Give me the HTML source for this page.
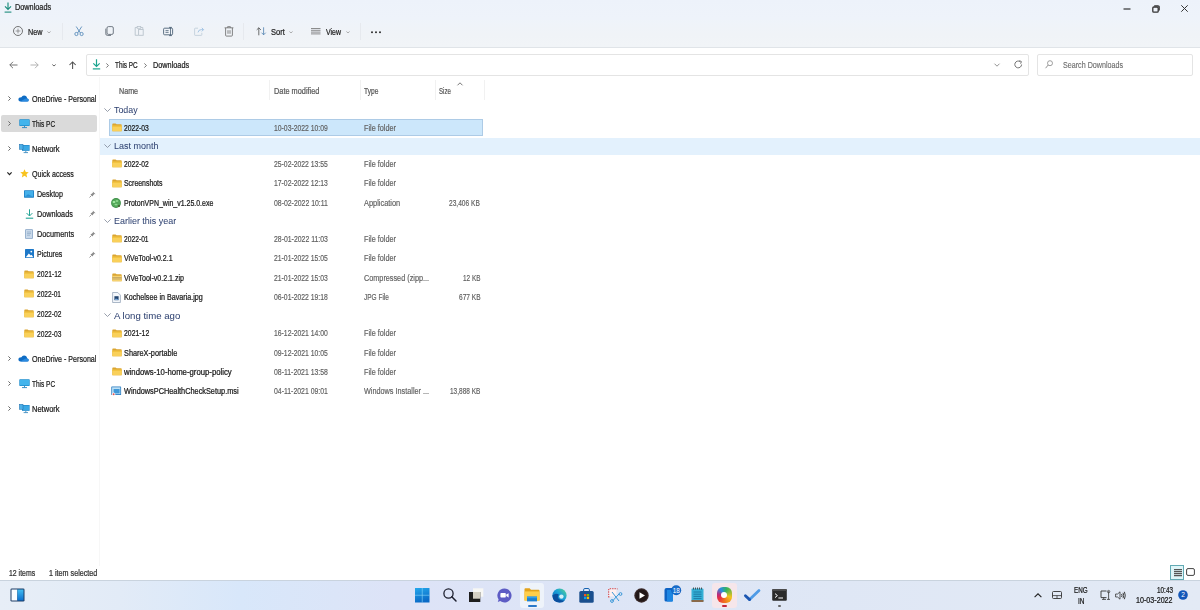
<!DOCTYPE html><html><head><meta charset="utf-8"><style>
*{box-sizing:border-box;margin:0;padding:0}
html,body{width:1200px;height:610px;overflow:hidden;background:#fff;font-family:"Liberation Sans",sans-serif;color:#1a1a1a}
.a{position:absolute;white-space:nowrap}
svg{position:absolute;overflow:visible}
.t7{font-size:7.2px;line-height:10px}
.hdr{font-size:7.4px;color:#5d5d5d;line-height:10px}
.grp{font-size:9px;color:#283c6c;line-height:12px}
.g{color:#666}
.sb{font-size:7.3px;line-height:10px;color:#1e1e1e}
</style></head><body><div id="root" style="position:absolute;left:0;top:0;width:1200px;height:610px">
<div class="a" style="left:0;top:0;width:1200px;height:48px;background:linear-gradient(180deg,#edf2fa 0px,#eef3fa 18px,#f0f3f7 34px,#f1f4f7 47px)"></div>
<div class="a" style="left:0;top:47px;width:1200px;height:1px;background:#e0e4e8"></div>
<svg style="left:3.5px;top:1.5px" width="8" height="11" viewBox="0 0 8 11"><path d="M4 0.6V7.4M1 4.4L4 7.4L7 4.4" stroke="#1b8c7c" stroke-width="1.15" fill="none"/><path d="M0.6 10.1H7.4" stroke="#1b8c7c" stroke-width="1.1"/></svg>
<div class="a" style="left:15.00px;top:3.40px;font-size:7.8px;line-height:10px;color:#1f1f1f;transform:scale(0.9355,1.100);transform-origin:0 50%;will-change:opacity;-webkit-text-stroke:0.22px #1f1f1f;">Downloads</div>
<svg style="left:1123px;top:8px" width="8" height="2"><path d="M0.5 1H7.5" stroke="#333" stroke-width="1.2"/></svg>
<svg style="left:1152px;top:5px" width="8" height="8" viewBox="0 0 8 8"><rect x="0.8" y="2" width="5.4" height="5.2" rx="1" stroke="#333" stroke-width="1.3" fill="none"/><path d="M2.2 0.8H6Q7.2 0.8 7.2 2V5.6" stroke="#333" stroke-width="1.2" fill="none"/></svg>
<svg style="left:1181px;top:5px" width="7" height="7" viewBox="0 0 7 7"><path d="M0.3 0.3L6.7 6.7M6.7 0.3L0.3 6.7" stroke="#333" stroke-width="1"/></svg>
<svg style="left:13px;top:26px" width="10" height="10" viewBox="0 0 10 10"><circle cx="5" cy="5" r="4.5" stroke="#555" stroke-width="0.8" fill="none"/><path d="M5 2.6V7.4M2.6 5H7.4" stroke="#666" stroke-width="0.6"/></svg>
<div class="a" style="left:28.00px;top:27.70px;font-size:7.8px;line-height:10px;color:#1f1f1f;transform:scale(0.9228,1.100);transform-origin:0 50%;will-change:opacity;-webkit-text-stroke:0.22px #1f1f1f;">New</div>
<svg style="left:47px;top:30.5px" width="4" height="2.5" viewBox="0 0 4 2.5"><path d="M0.4 0.5L2 1.9L3.6 0.5" stroke="#999" stroke-width="0.8" fill="none"/></svg>
<div class="a" style="left:62px;top:23px;width:1px;height:17px;background:#e6e9ee"></div>
<svg style="left:74px;top:26px" width="10" height="10" viewBox="0 0 10 10"><path d="M2.2 0.5L6.4 7M7.8 0.5L3.6 7" stroke="#4a82b4" stroke-width="0.8" fill="none"/><circle cx="2.4" cy="8" r="1.6" stroke="#4a82b4" stroke-width="0.8" fill="none"/><circle cx="7.6" cy="8" r="1.6" stroke="#4a82b4" stroke-width="0.8" fill="none"/></svg>
<svg style="left:105px;top:26px" width="9" height="10" viewBox="0 0 9 10"><rect x="2" y="0.6" width="6.3" height="7.8" rx="1.4" stroke="#5c6670" stroke-width="0.85" fill="none"/><path d="M0.8 2.6V7.8Q0.8 9.4 2.4 9.4H6" stroke="#5c6670" stroke-width="0.85" fill="none"/></svg>
<svg style="left:134px;top:26px" width="10" height="10" viewBox="0 0 10 10"><path d="M3 1.5H1.2V9.3H4" stroke="#b9c3cc" stroke-width="0.9" fill="none"/><rect x="3.2" y="0.5" width="3.5" height="1.8" stroke="#b9c3cc" stroke-width="0.8" fill="none"/><rect x="4.6" y="3.5" width="4.6" height="5.8" stroke="#b9c3cc" stroke-width="0.9" fill="none"/><path d="M7 1.5H8.8V3" stroke="#b9c3cc" stroke-width="0.9" fill="none"/></svg>
<svg style="left:163px;top:27px" width="12" height="9" viewBox="0 0 12 9"><rect x="0.6" y="1.2" width="9" height="6.6" rx="1" stroke="#4d6276" stroke-width="0.9" fill="none"/><path d="M7.5 0.3V8.7M6 0.4H9M6 8.6H9M2.5 3.6H5.6M2.5 5.4H5.6" stroke="#4d6276" stroke-width="0.8"/></svg>
<svg style="left:194px;top:27px" width="10" height="9" viewBox="0 0 10 9"><path d="M4 1.2H1.2Q0.6 1.2 0.6 1.8V7.8Q0.6 8.4 1.2 8.4H7.2Q7.8 8.4 7.8 7.8V5.8" stroke="#bccbd8" stroke-width="0.8" fill="none"/><path d="M4 5.4Q4.4 2.6 7.4 2.6H9.4M7.8 0.8L9.6 2.6L7.8 4.4" stroke="#9cc0e2" stroke-width="0.9" fill="none"/></svg>
<svg style="left:224px;top:26px" width="10" height="11" viewBox="0 0 10 11"><path d="M0.6 1.8H9.4M3.6 1.6V0.7H6.4V1.6M1.6 2V9.2Q1.6 10.1 2.5 10.1H7.5Q8.4 10.1 8.4 9.2V2M4 4.2V7.8M6 4.2V7.8" stroke="#666" stroke-width="0.8" fill="none"/></svg>
<div class="a" style="left:243px;top:23px;width:1px;height:17px;background:#e6e9ee"></div>
<svg style="left:256px;top:27px" width="10.5" height="8.5" viewBox="0 0 10.5 8.5"><path d="M2.8 8.3V0.8M0.7 2.9L2.8 0.8L4.9 2.9" stroke="#4a4a4a" stroke-width="0.8" fill="none"/><path d="M7.6 0.3V7.8M5.5 5.7L7.6 7.8L9.7 5.7" stroke="#4d7fae" stroke-width="0.8" fill="none"/></svg>
<div class="a" style="left:270.60px;top:27.70px;font-size:7.8px;line-height:10px;color:#1f1f1f;transform:scale(0.9647,1.100);transform-origin:0 50%;will-change:opacity;-webkit-text-stroke:0.22px #1f1f1f;">Sort</div>
<svg style="left:289px;top:30.5px" width="4" height="2.5" viewBox="0 0 4 2.5"><path d="M0.4 0.5L2 1.9L3.6 0.5" stroke="#999" stroke-width="0.8" fill="none"/></svg>
<svg style="left:310.7px;top:28.2px" width="9.5" height="6.5" viewBox="0 0 9.5 6.5"><path d="M0 0.5H9.5M0 2.3H9.5M0 4.1H9.5M0 5.9H9.5" stroke="#6a6a6a" stroke-width="0.75"/></svg>
<div class="a" style="left:326.00px;top:27.70px;font-size:7.8px;line-height:10px;color:#1f1f1f;transform:scale(0.8947,1.100);transform-origin:0 50%;will-change:opacity;-webkit-text-stroke:0.22px #1f1f1f;">View</div>
<svg style="left:346px;top:30.5px" width="4" height="2.5" viewBox="0 0 4 2.5"><path d="M0.4 0.5L2 1.9L3.6 0.5" stroke="#999" stroke-width="0.8" fill="none"/></svg>
<div class="a" style="left:360px;top:23px;width:1px;height:17px;background:#e6e9ee"></div>
<svg style="left:370.8px;top:30.8px" width="10" height="3" viewBox="0 0 10 3"><circle cx="1" cy="1.2" r="0.95" fill="#222"/><circle cx="5" cy="1.2" r="0.95" fill="#222"/><circle cx="9" cy="1.2" r="0.95" fill="#222"/></svg>
<svg style="left:9px;top:61px" width="9" height="8" viewBox="0 0 9 8"><path d="M8.5 4H0.8M4 0.8L0.8 4L4 7.2" stroke="#666" stroke-width="0.9" fill="none"/></svg>
<svg style="left:30px;top:61px" width="9" height="8" viewBox="0 0 9 8"><path d="M0.5 4H8.2M5 0.8L8.2 4L5 7.2" stroke="#aaa" stroke-width="0.9" fill="none"/></svg>
<svg style="left:52px;top:63.5px" width="4" height="2.5" viewBox="0 0 4 2.5"><path d="M0.3 0.5L2 2L3.7 0.5" stroke="#555" stroke-width="0.9" fill="none"/></svg>
<svg style="left:68.5px;top:60.5px" width="8" height="8.5" viewBox="0 0 8 8.5"><path d="M3.6 8V1M0.5 4L3.6 0.9L6.7 4" stroke="#505050" stroke-width="1.05" fill="none"/></svg>
<div class="a" style="left:86px;top:54px;width:943px;height:22px;border:1px solid #e4e4e4;border-radius:2px;background:#fff"></div>
<svg style="left:92px;top:59px" width="9" height="11" viewBox="0 0 9 11"><path d="M4.5 0.3V7.4M1.3 4.3L4.5 7.5L7.7 4.3" stroke="#1ba48f" stroke-width="1.2" fill="none"/><path d="M0.8 9.9H8.2" stroke="#1ba48f" stroke-width="1.2"/></svg>
<svg style="left:105.5px;top:62.5px" width="3" height="5" viewBox="0 0 3 5"><path d="M0.4 0.4L2.4 2.5L0.4 4.6" stroke="#555" stroke-width="0.8" fill="none"/></svg>
<div class="a" style="left:115.00px;top:60.75px;font-size:7.8px;line-height:10px;color:#1f1f1f;transform:scale(0.8184,1.100);transform-origin:0 50%;will-change:opacity;-webkit-text-stroke:0.22px #1f1f1f;">This PC</div>
<svg style="left:143.5px;top:62.5px" width="3" height="5" viewBox="0 0 3 5"><path d="M0.4 0.4L2.4 2.5L0.4 4.6" stroke="#555" stroke-width="0.8" fill="none"/></svg>
<div class="a" style="left:153.30px;top:60.75px;font-size:7.8px;line-height:10px;color:#1f1f1f;transform:scale(0.9355,1.100);transform-origin:0 50%;will-change:opacity;-webkit-text-stroke:0.22px #1f1f1f;">Downloads</div>
<svg style="left:993.5px;top:63px" width="6" height="4" viewBox="0 0 6 4"><path d="M0.5 0.7L3 3.2L5.5 0.7" stroke="#777" stroke-width="0.8" fill="none"/></svg>
<svg style="left:1014px;top:60px" width="9" height="9" viewBox="0 0 9 9"><path d="M7.6 4.5A3.4 3.4 0 1 1 6.2 1.7" stroke="#666" stroke-width="0.9" fill="none"/><path d="M5.4 0.6L7.4 1.6L6.6 3.7" stroke="#666" stroke-width="0.9" fill="none"/></svg>
<div class="a" style="left:1037px;top:54px;width:156px;height:22px;border:1px solid #e4e4e4;border-radius:2px;background:#fff"></div>
<svg style="left:1045px;top:60px" width="8" height="9" viewBox="0 0 8 9"><circle cx="5" cy="3.2" r="2.5" stroke="#888" stroke-width="0.8" fill="none"/><path d="M3.2 5L0.6 8.2" stroke="#888" stroke-width="0.9"/></svg>
<div class="a" style="left:1062.50px;top:60.75px;font-size:7.6px;line-height:10px;color:#6a6a6a;transform:scale(0.9421,1.130);transform-origin:0 50%;will-change:opacity;-webkit-text-stroke:0.1px #6a6a6a;">Search Downloads</div>
<div class="a" style="left:99px;top:77px;width:1px;height:489px;background:#f7f7f7"></div>
<div class="a" style="left:1px;top:115px;width:96px;height:17px;background:#dadada;border-radius:2px"></div>
<svg style="left:8px;top:95.9px" width="3" height="5" viewBox="0 0 3 5"><path d="M0.4 0.4L2.5 2.5L0.4 4.6" stroke="#6a6a6a" stroke-width="1" fill="none"/></svg>
<svg style="left:18px;top:94.9px" width="11" height="7" viewBox="0 0 11 7"><path d="M2.4 6.6H9.2Q10.7 6.6 10.7 5.1Q10.7 3.7 9.2 3.6Q8.8 0.6 6 0.6Q4.2 0.6 3.4 2.2Q0.4 2.2 0.4 4.5Q0.4 6.6 2.4 6.6Z" fill="#0f6cc4"/><path d="M2.4 6.6H9.2Q10.7 6.6 10.7 5.1Q10.7 3.7 9.2 3.6Q7 3.4 5.8 4.4Z" fill="#2a8ae0"/></svg>
<div class="a" style="left:32.00px;top:93.90px;font-size:8.3px;line-height:10px;color:#1c1c1c;transform:scale(0.8565,1.000);transform-origin:0 50%;will-change:opacity;-webkit-text-stroke:0.22px #1c1c1c;">OneDrive - Personal</div>
<svg style="left:8px;top:120.9px" width="3" height="5" viewBox="0 0 3 5"><path d="M0.4 0.4L2.5 2.5L0.4 4.6" stroke="#6a6a6a" stroke-width="1" fill="none"/></svg>
<svg style="left:18.5px;top:118.9px" width="11" height="9" viewBox="0 0 11 9"><rect x="0.3" y="0.3" width="10.4" height="6.6" rx="0.6" fill="#1e90d0"/><rect x="1" y="1" width="9" height="5.2" fill="#42b4ec"/><path d="M5.5 7V8.4M3 8.6H8" stroke="#2a86c0" stroke-width="0.9"/></svg>
<div class="a" style="left:32.00px;top:118.90px;font-size:8.3px;line-height:10px;color:#1c1c1c;transform:scale(0.7826,1.000);transform-origin:0 50%;will-change:opacity;-webkit-text-stroke:0.22px #1c1c1c;">This PC</div>
<svg style="left:8px;top:145.9px" width="3" height="5" viewBox="0 0 3 5"><path d="M0.4 0.4L2.5 2.5L0.4 4.6" stroke="#6a6a6a" stroke-width="1" fill="none"/></svg>
<svg style="left:18.5px;top:143.9px" width="11" height="9" viewBox="0 0 11 9"><rect x="3" y="1" width="7.6" height="5.8" fill="#1e86c8"/><rect x="3.6" y="1.6" width="6.4" height="4.6" fill="#3aa8e4"/><rect x="0.4" y="0.3" width="3.6" height="5" fill="#4cb0e8" stroke="#1a6aa8" stroke-width="0.5"/><path d="M6.8 7V8.4M4.6 8.6H9" stroke="#2a7fb8" stroke-width="0.8"/></svg>
<div class="a" style="left:32.00px;top:143.90px;font-size:8.3px;line-height:10px;color:#1c1c1c;transform:scale(0.9067,1.000);transform-origin:0 50%;will-change:opacity;-webkit-text-stroke:0.22px #1c1c1c;">Network</div>
<svg style="left:8px;top:355.9px" width="3" height="5" viewBox="0 0 3 5"><path d="M0.4 0.4L2.5 2.5L0.4 4.6" stroke="#6a6a6a" stroke-width="1" fill="none"/></svg>
<svg style="left:18px;top:354.9px" width="11" height="7" viewBox="0 0 11 7"><path d="M2.4 6.6H9.2Q10.7 6.6 10.7 5.1Q10.7 3.7 9.2 3.6Q8.8 0.6 6 0.6Q4.2 0.6 3.4 2.2Q0.4 2.2 0.4 4.5Q0.4 6.6 2.4 6.6Z" fill="#0f6cc4"/><path d="M2.4 6.6H9.2Q10.7 6.6 10.7 5.1Q10.7 3.7 9.2 3.6Q7 3.4 5.8 4.4Z" fill="#2a8ae0"/></svg>
<div class="a" style="left:32.00px;top:353.90px;font-size:8.3px;line-height:10px;color:#1c1c1c;transform:scale(0.8565,1.000);transform-origin:0 50%;will-change:opacity;-webkit-text-stroke:0.22px #1c1c1c;">OneDrive - Personal</div>
<svg style="left:8px;top:380.9px" width="3" height="5" viewBox="0 0 3 5"><path d="M0.4 0.4L2.5 2.5L0.4 4.6" stroke="#6a6a6a" stroke-width="1" fill="none"/></svg>
<svg style="left:18.5px;top:378.9px" width="11" height="9" viewBox="0 0 11 9"><rect x="0.3" y="0.3" width="10.4" height="6.6" rx="0.6" fill="#1e90d0"/><rect x="1" y="1" width="9" height="5.2" fill="#42b4ec"/><path d="M5.5 7V8.4M3 8.6H8" stroke="#2a86c0" stroke-width="0.9"/></svg>
<div class="a" style="left:32.00px;top:378.90px;font-size:8.3px;line-height:10px;color:#1c1c1c;transform:scale(0.7826,1.000);transform-origin:0 50%;will-change:opacity;-webkit-text-stroke:0.22px #1c1c1c;">This PC</div>
<svg style="left:8px;top:405.9px" width="3" height="5" viewBox="0 0 3 5"><path d="M0.4 0.4L2.5 2.5L0.4 4.6" stroke="#6a6a6a" stroke-width="1" fill="none"/></svg>
<svg style="left:18.5px;top:403.9px" width="11" height="9" viewBox="0 0 11 9"><rect x="3" y="1" width="7.6" height="5.8" fill="#1e86c8"/><rect x="3.6" y="1.6" width="6.4" height="4.6" fill="#3aa8e4"/><rect x="0.4" y="0.3" width="3.6" height="5" fill="#4cb0e8" stroke="#1a6aa8" stroke-width="0.5"/><path d="M6.8 7V8.4M4.6 8.6H9" stroke="#2a7fb8" stroke-width="0.8"/></svg>
<div class="a" style="left:32.00px;top:403.90px;font-size:8.3px;line-height:10px;color:#1c1c1c;transform:scale(0.9067,1.000);transform-origin:0 50%;will-change:opacity;-webkit-text-stroke:0.22px #1c1c1c;">Network</div>
<svg style="left:7px;top:172.1px" width="5" height="3" viewBox="0 0 5 3"><path d="M0.4 0.4L2.5 2.6L4.6 0.4" stroke="#222" stroke-width="1.2" fill="none"/></svg>
<svg style="left:19.5px;top:169px" width="9" height="9" viewBox="0 0 10 10"><path d="M5 0.3L6.4 3.4L9.7 3.7L7.2 5.9L7.9 9.4L5 7.6L2.1 9.4L2.8 5.9L0.3 3.7L3.6 3.4Z" fill="#f8c31f"/></svg>
<div class="a" style="left:32.00px;top:168.90px;font-size:8.3px;line-height:10px;color:#1c1c1c;transform:scale(0.8490,1.000);transform-origin:0 50%;will-change:opacity;-webkit-text-stroke:0.22px #1c1c1c;">Quick access</div>
<svg style="left:24px;top:190px" width="10" height="8" viewBox="0 0 10 8"><rect x="0" y="0.3" width="10" height="7.4" rx="0.6" fill="#1b7fc4"/><rect x="0.8" y="1" width="8.4" height="5.8" fill="#45b0ea"/><path d="M0.8 6.8L4 4.2L9.2 6.8Z" fill="#2a90d4"/></svg>
<div class="a" style="left:37.00px;top:189.10px;font-size:8.3px;line-height:10px;color:#1c1c1c;transform:scale(0.8539,1.000);transform-origin:0 50%;will-change:opacity;-webkit-text-stroke:0.22px #1c1c1c;">Desktop</div>
<svg style="left:89px;top:190.5px" width="7" height="7" viewBox="0 0 7 7"><path d="M0.5 6.5L2.6 4.4" stroke="#8c8c8c" stroke-width="0.9"/><path d="M1.4 3.2L3.8 5.6L4.2 4.2L5.4 3L6.6 3.2L3.8 0.4L4 1.6L2.8 2.8Z" fill="#8c8c8c"/></svg>
<svg style="left:24.5px;top:209px" width="9" height="10" viewBox="0 0 9 10"><path d="M4.5 0.3V6.8M1.6 4.1L4.5 7L7.4 4.1" stroke="#22a394" stroke-width="1" fill="none"/><path d="M0.8 9.2H8.2" stroke="#22a394" stroke-width="1.1"/></svg>
<div class="a" style="left:37.00px;top:209.00px;font-size:8.3px;line-height:10px;color:#1c1c1c;transform:scale(0.8718,1.000);transform-origin:0 50%;will-change:opacity;-webkit-text-stroke:0.22px #1c1c1c;">Downloads</div>
<svg style="left:89px;top:210.3px" width="7" height="7" viewBox="0 0 7 7"><path d="M0.5 6.5L2.6 4.4" stroke="#8c8c8c" stroke-width="0.9"/><path d="M1.4 3.2L3.8 5.6L4.2 4.2L5.4 3L6.6 3.2L3.8 0.4L4 1.6L2.8 2.8Z" fill="#8c8c8c"/></svg>
<svg style="left:25px;top:229px" width="8" height="10" viewBox="0 0 8 10"><rect x="0.2" y="0.2" width="7.6" height="9.6" rx="0.6" fill="#7f9fc2"/><rect x="1" y="1" width="6" height="8" fill="#c9d9ea"/><path d="M2 3H6M2 4.6H6M2 6.2H5" stroke="#8aa6c4" stroke-width="0.7"/></svg>
<div class="a" style="left:37.00px;top:229.00px;font-size:8.3px;line-height:10px;color:#1c1c1c;transform:scale(0.8838,1.000);transform-origin:0 50%;will-change:opacity;-webkit-text-stroke:0.22px #1c1c1c;">Documents</div>
<svg style="left:89px;top:230.5px" width="7" height="7" viewBox="0 0 7 7"><path d="M0.5 6.5L2.6 4.4" stroke="#8c8c8c" stroke-width="0.9"/><path d="M1.4 3.2L3.8 5.6L4.2 4.2L5.4 3L6.6 3.2L3.8 0.4L4 1.6L2.8 2.8Z" fill="#8c8c8c"/></svg>
<svg style="left:24.5px;top:249px" width="9" height="9" viewBox="0 0 9 9"><rect x="0" y="0" width="9" height="9" rx="0.6" fill="#1d78c8"/><path d="M0.8 8.2L3.8 4.6L5.8 6.6L6.6 5.8L8.2 8.2Z" fill="#fff"/><circle cx="6.3" cy="2.6" r="0.9" fill="#fff"/></svg>
<div class="a" style="left:37.00px;top:248.80px;font-size:8.3px;line-height:10px;color:#1c1c1c;transform:scale(0.8438,1.000);transform-origin:0 50%;will-change:opacity;-webkit-text-stroke:0.22px #1c1c1c;">Pictures</div>
<svg style="left:89px;top:250.5px" width="7" height="7" viewBox="0 0 7 7"><path d="M0.5 6.5L2.6 4.4" stroke="#8c8c8c" stroke-width="0.9"/><path d="M1.4 3.2L3.8 5.6L4.2 4.2L5.4 3L6.6 3.2L3.8 0.4L4 1.6L2.8 2.8Z" fill="#8c8c8c"/></svg>
<svg style="left:24px;top:269.5px" width="10" height="8.6" viewBox="0 0 10 8.6"><path d="M0.3 1.2Q0.3 0.4 1 0.4H3.6L4.6 1.3H9Q9.7 1.3 9.7 2V7.8Q9.7 8.3 9.2 8.3H0.8Q0.3 8.3 0.3 7.8Z" fill="#dba530"/><path d="M0.3 2.7H9.7V7.8Q9.7 8.3 9.2 8.3H0.8Q0.3 8.3 0.3 7.8Z" fill="#f9d05a"/><path d="M0.3 2.7H9.7V4H0.3Z" fill="#f2c340"/></svg>
<div class="a" style="left:37.00px;top:269.00px;font-size:8.3px;line-height:10px;color:#1c1c1c;transform:scale(0.8076,1.000);transform-origin:0 50%;will-change:opacity;-webkit-text-stroke:0.22px #1c1c1c;">2021-12</div>
<svg style="left:24px;top:289.4px" width="10" height="8.6" viewBox="0 0 10 8.6"><path d="M0.3 1.2Q0.3 0.4 1 0.4H3.6L4.6 1.3H9Q9.7 1.3 9.7 2V7.8Q9.7 8.3 9.2 8.3H0.8Q0.3 8.3 0.3 7.8Z" fill="#dba530"/><path d="M0.3 2.7H9.7V7.8Q9.7 8.3 9.2 8.3H0.8Q0.3 8.3 0.3 7.8Z" fill="#f9d05a"/><path d="M0.3 2.7H9.7V4H0.3Z" fill="#f2c340"/></svg>
<div class="a" style="left:37.00px;top:288.90px;font-size:8.3px;line-height:10px;color:#1c1c1c;transform:scale(0.7879,1.000);transform-origin:0 50%;will-change:opacity;-webkit-text-stroke:0.22px #1c1c1c;">2022-01</div>
<svg style="left:24px;top:309.4px" width="10" height="8.6" viewBox="0 0 10 8.6"><path d="M0.3 1.2Q0.3 0.4 1 0.4H3.6L4.6 1.3H9Q9.7 1.3 9.7 2V7.8Q9.7 8.3 9.2 8.3H0.8Q0.3 8.3 0.3 7.8Z" fill="#dba530"/><path d="M0.3 2.7H9.7V7.8Q9.7 8.3 9.2 8.3H0.8Q0.3 8.3 0.3 7.8Z" fill="#f9d05a"/><path d="M0.3 2.7H9.7V4H0.3Z" fill="#f2c340"/></svg>
<div class="a" style="left:37.00px;top:308.90px;font-size:8.3px;line-height:10px;color:#1c1c1c;transform:scale(0.8010,1.000);transform-origin:0 50%;will-change:opacity;-webkit-text-stroke:0.22px #1c1c1c;">2022-02</div>
<svg style="left:24px;top:329.4px" width="10" height="8.6" viewBox="0 0 10 8.6"><path d="M0.3 1.2Q0.3 0.4 1 0.4H3.6L4.6 1.3H9Q9.7 1.3 9.7 2V7.8Q9.7 8.3 9.2 8.3H0.8Q0.3 8.3 0.3 7.8Z" fill="#dba530"/><path d="M0.3 2.7H9.7V7.8Q9.7 8.3 9.2 8.3H0.8Q0.3 8.3 0.3 7.8Z" fill="#f9d05a"/><path d="M0.3 2.7H9.7V4H0.3Z" fill="#f2c340"/></svg>
<div class="a" style="left:37.00px;top:328.90px;font-size:8.3px;line-height:10px;color:#1c1c1c;transform:scale(0.8010,1.000);transform-origin:0 50%;will-change:opacity;-webkit-text-stroke:0.22px #1c1c1c;">2022-03</div>
<div class="a" style="left:118.60px;top:86.50px;font-size:7.6px;line-height:10px;color:#5a5a5a;transform:scale(0.9421,1.130);transform-origin:0 50%;will-change:opacity;-webkit-text-stroke:0.22px #5a5a5a;">Name</div>
<div class="a" style="left:274.00px;top:86.50px;font-size:7.6px;line-height:10px;color:#5a5a5a;transform:scale(0.9682,1.130);transform-origin:0 50%;will-change:opacity;-webkit-text-stroke:0.22px #5a5a5a;">Date modified</div>
<div class="a" style="left:364.00px;top:86.50px;font-size:7.6px;line-height:10px;color:#5a5a5a;transform:scale(0.8740,1.130);transform-origin:0 50%;will-change:opacity;-webkit-text-stroke:0.22px #5a5a5a;">Type</div>
<div class="a" style="left:438.60px;top:86.50px;font-size:7.6px;line-height:10px;color:#5a5a5a;transform:scale(0.7981,1.130);transform-origin:0 50%;will-change:opacity;-webkit-text-stroke:0.22px #5a5a5a;">Size</div>
<div class="a" style="left:269px;top:80px;width:1px;height:20px;background:#f1f1f1"></div>
<div class="a" style="left:359.5px;top:80px;width:1px;height:20px;background:#f1f1f1"></div>
<div class="a" style="left:434.5px;top:80px;width:1px;height:20px;background:#f1f1f1"></div>
<div class="a" style="left:484px;top:80px;width:1px;height:20px;background:#f1f1f1"></div>
<svg style="left:457.3px;top:81.6px" width="6" height="4" viewBox="0 0 6 4"><path d="M0.5 3.3L3 0.8L5.5 3.3" stroke="#666" stroke-width="0.9" fill="none"/></svg>
<div class="a" style="left:108.5px;top:119px;width:374px;height:17px;background:#cce7fb;border:1px solid #adcbe6"></div>
<div class="a" style="left:100px;top:138px;width:1100px;height:17px;background:#e3f1fd"></div>
<svg style="left:104px;top:107.50px" width="7" height="4" viewBox="0 0 7 4"><path d="M0.4 0.4L3.5 3.5L6.6 0.4" stroke="#7d8797" stroke-width="0.8" fill="none"/></svg>
<div class="a" style="left:113.50px;top:103.70px;font-size:9.2px;line-height:12px;color:#2e4170;transform:scale(0.9613,1.000);transform-origin:0 50%;will-change:opacity;-webkit-text-stroke:0.02px #2e4170;">Today</div>
<svg style="left:111.6px;top:123.2px" width="10" height="8.6" viewBox="0 0 10 8.6"><path d="M0.3 1.2Q0.3 0.4 1 0.4H3.6L4.6 1.3H9Q9.7 1.3 9.7 2V7.8Q9.7 8.3 9.2 8.3H0.8Q0.3 8.3 0.3 7.8Z" fill="#dba530"/><path d="M0.3 2.7H9.7V7.8Q9.7 8.3 9.2 8.3H0.8Q0.3 8.3 0.3 7.8Z" fill="#f9d05a"/><path d="M0.3 2.7H9.7V4H0.3Z" fill="#f2c340"/></svg>
<div class="a" style="left:123.90px;top:123.80px;font-size:7.6px;line-height:10px;color:#1b1b1b;transform:scale(0.8874,1.130);transform-origin:0 50%;will-change:opacity;-webkit-text-stroke:0.22px #1b1b1b;">2022-03</div>
<div class="a" style="left:274.10px;top:123.80px;font-size:7.6px;line-height:10px;color:#606060;transform:scale(0.8982,1.130);transform-origin:0 50%;will-change:opacity;-webkit-text-stroke:0.15px #606060;">10-03-2022 10:09</div>
<div class="a" style="left:363.80px;top:123.80px;font-size:7.6px;line-height:10px;color:#606060;transform:scale(0.9590,1.130);transform-origin:0 50%;will-change:opacity;-webkit-text-stroke:0.15px #606060;">File folder</div>
<svg style="left:104px;top:144.00px" width="7" height="4" viewBox="0 0 7 4"><path d="M0.4 0.4L3.5 3.5L6.6 0.4" stroke="#7d8797" stroke-width="0.8" fill="none"/></svg>
<div class="a" style="left:113.50px;top:140.20px;font-size:9.2px;line-height:12px;color:#2e4170;transform:scale(0.9799,1.000);transform-origin:0 50%;will-change:opacity;-webkit-text-stroke:0.02px #2e4170;">Last month</div>
<svg style="left:111.6px;top:159.29999999999998px" width="10" height="8.6" viewBox="0 0 10 8.6"><path d="M0.3 1.2Q0.3 0.4 1 0.4H3.6L4.6 1.3H9Q9.7 1.3 9.7 2V7.8Q9.7 8.3 9.2 8.3H0.8Q0.3 8.3 0.3 7.8Z" fill="#dba530"/><path d="M0.3 2.7H9.7V7.8Q9.7 8.3 9.2 8.3H0.8Q0.3 8.3 0.3 7.8Z" fill="#f9d05a"/><path d="M0.3 2.7H9.7V4H0.3Z" fill="#f2c340"/></svg>
<div class="a" style="left:123.90px;top:159.90px;font-size:7.6px;line-height:10px;color:#1b1b1b;transform:scale(0.8856,1.130);transform-origin:0 50%;will-change:opacity;-webkit-text-stroke:0.22px #1b1b1b;">2022-02</div>
<div class="a" style="left:274.10px;top:159.90px;font-size:7.6px;line-height:10px;color:#606060;transform:scale(0.8982,1.130);transform-origin:0 50%;will-change:opacity;-webkit-text-stroke:0.15px #606060;">25-02-2022 13:55</div>
<div class="a" style="left:363.80px;top:159.90px;font-size:7.6px;line-height:10px;color:#606060;transform:scale(0.9590,1.130);transform-origin:0 50%;will-change:opacity;-webkit-text-stroke:0.15px #606060;">File folder</div>
<svg style="left:111.6px;top:178.7px" width="10" height="8.6" viewBox="0 0 10 8.6"><path d="M0.3 1.2Q0.3 0.4 1 0.4H3.6L4.6 1.3H9Q9.7 1.3 9.7 2V7.8Q9.7 8.3 9.2 8.3H0.8Q0.3 8.3 0.3 7.8Z" fill="#dba530"/><path d="M0.3 2.7H9.7V7.8Q9.7 8.3 9.2 8.3H0.8Q0.3 8.3 0.3 7.8Z" fill="#f9d05a"/><path d="M0.3 2.7H9.7V4H0.3Z" fill="#f2c340"/></svg>
<div class="a" style="left:123.90px;top:179.30px;font-size:7.6px;line-height:10px;color:#1b1b1b;transform:scale(0.9113,1.130);transform-origin:0 50%;will-change:opacity;-webkit-text-stroke:0.22px #1b1b1b;">Screenshots</div>
<div class="a" style="left:274.10px;top:179.30px;font-size:7.6px;line-height:10px;color:#606060;transform:scale(0.8982,1.130);transform-origin:0 50%;will-change:opacity;-webkit-text-stroke:0.15px #606060;">17-02-2022 12:13</div>
<div class="a" style="left:363.80px;top:179.30px;font-size:7.6px;line-height:10px;color:#606060;transform:scale(0.9590,1.130);transform-origin:0 50%;will-change:opacity;-webkit-text-stroke:0.15px #606060;">File folder</div>
<svg style="left:111px;top:197.70000000000002px" width="10" height="10" viewBox="0 0 10 10"><circle cx="5" cy="5" r="4.9" fill="#3d9048"/><circle cx="5" cy="5" r="4" fill="#55a85a"/><ellipse cx="3" cy="4" rx="1.4" ry="0.9" fill="#a8f0a8"/><ellipse cx="6" cy="3" rx="1.3" ry="0.8" fill="#a0e8a0"/><ellipse cx="5" cy="6.6" rx="1.6" ry="0.8" fill="#8fd890"/><circle cx="8" cy="8" r="1" fill="#4a5a30"/></svg>
<div class="a" style="left:123.90px;top:198.70px;font-size:7.6px;line-height:10px;color:#1b1b1b;transform:scale(0.9200,1.130);transform-origin:0 50%;will-change:opacity;-webkit-text-stroke:0.22px #1b1b1b;">ProtonVPN_win_v1.25.0.exe</div>
<div class="a" style="left:274.10px;top:198.70px;font-size:7.6px;line-height:10px;color:#606060;transform:scale(0.9068,1.130);transform-origin:0 50%;will-change:opacity;-webkit-text-stroke:0.15px #606060;">08-02-2022 10:11</div>
<div class="a" style="left:363.80px;top:198.70px;font-size:7.6px;line-height:10px;color:#606060;transform:scale(0.9736,1.130);transform-origin:0 50%;will-change:opacity;-webkit-text-stroke:0.15px #606060;">Application</div>
<div class="a" style="left:449.40px;top:198.70px;font-size:7.6px;line-height:10px;color:#606060;transform:scale(0.8677,1.130);transform-origin:0 50%;will-change:opacity;-webkit-text-stroke:0.15px #606060;">23,406 KB</div>
<svg style="left:104px;top:218.90px" width="7" height="4" viewBox="0 0 7 4"><path d="M0.4 0.4L3.5 3.5L6.6 0.4" stroke="#7d8797" stroke-width="0.8" fill="none"/></svg>
<div class="a" style="left:113.50px;top:215.10px;font-size:9.2px;line-height:12px;color:#2e4170;transform:scale(0.9748,1.000);transform-origin:0 50%;will-change:opacity;-webkit-text-stroke:0.02px #2e4170;">Earlier this year</div>
<svg style="left:111.6px;top:234.29999999999998px" width="10" height="8.6" viewBox="0 0 10 8.6"><path d="M0.3 1.2Q0.3 0.4 1 0.4H3.6L4.6 1.3H9Q9.7 1.3 9.7 2V7.8Q9.7 8.3 9.2 8.3H0.8Q0.3 8.3 0.3 7.8Z" fill="#dba530"/><path d="M0.3 2.7H9.7V7.8Q9.7 8.3 9.2 8.3H0.8Q0.3 8.3 0.3 7.8Z" fill="#f9d05a"/><path d="M0.3 2.7H9.7V4H0.3Z" fill="#f2c340"/></svg>
<div class="a" style="left:123.90px;top:234.90px;font-size:7.6px;line-height:10px;color:#1b1b1b;transform:scale(0.8820,1.130);transform-origin:0 50%;will-change:opacity;-webkit-text-stroke:0.22px #1b1b1b;">2022-01</div>
<div class="a" style="left:274.10px;top:234.90px;font-size:7.6px;line-height:10px;color:#606060;transform:scale(0.9068,1.130);transform-origin:0 50%;will-change:opacity;-webkit-text-stroke:0.15px #606060;">28-01-2022 11:03</div>
<div class="a" style="left:363.80px;top:234.90px;font-size:7.6px;line-height:10px;color:#606060;transform:scale(0.9590,1.130);transform-origin:0 50%;will-change:opacity;-webkit-text-stroke:0.15px #606060;">File folder</div>
<svg style="left:111.6px;top:253.59999999999997px" width="10" height="8.6" viewBox="0 0 10 8.6"><path d="M0.3 1.2Q0.3 0.4 1 0.4H3.6L4.6 1.3H9Q9.7 1.3 9.7 2V7.8Q9.7 8.3 9.2 8.3H0.8Q0.3 8.3 0.3 7.8Z" fill="#dba530"/><path d="M0.3 2.7H9.7V7.8Q9.7 8.3 9.2 8.3H0.8Q0.3 8.3 0.3 7.8Z" fill="#f9d05a"/><path d="M0.3 2.7H9.7V4H0.3Z" fill="#f2c340"/></svg>
<div class="a" style="left:123.90px;top:254.20px;font-size:7.6px;line-height:10px;color:#1b1b1b;transform:scale(0.9227,1.130);transform-origin:0 50%;will-change:opacity;-webkit-text-stroke:0.22px #1b1b1b;">ViVeTool-v0.2.1</div>
<div class="a" style="left:274.10px;top:254.20px;font-size:7.6px;line-height:10px;color:#606060;transform:scale(0.8982,1.130);transform-origin:0 50%;will-change:opacity;-webkit-text-stroke:0.15px #606060;">21-01-2022 15:05</div>
<div class="a" style="left:363.80px;top:254.20px;font-size:7.6px;line-height:10px;color:#606060;transform:scale(0.9590,1.130);transform-origin:0 50%;will-change:opacity;-webkit-text-stroke:0.15px #606060;">File folder</div>
<svg style="left:111.6px;top:272.9px" width="10" height="8.6" viewBox="0 0 10 8.6"><path d="M0.3 1.2Q0.3 0.4 1 0.4H3.6L4.6 1.3H9Q9.7 1.3 9.7 2V7.8Q9.7 8.3 9.2 8.3H0.8Q0.3 8.3 0.3 7.8Z" fill="#dba530"/><path d="M0.3 2.7H9.7V7.8Q9.7 8.3 9.2 8.3H0.8Q0.3 8.3 0.3 7.8Z" fill="#f6d270"/><path d="M0.3 4.6H9.7M0.3 6H9.7" stroke="#b09660" stroke-width="0.7"/></svg>
<div class="a" style="left:123.90px;top:273.50px;font-size:7.6px;line-height:10px;color:#1b1b1b;transform:scale(0.9318,1.130);transform-origin:0 50%;will-change:opacity;-webkit-text-stroke:0.22px #1b1b1b;">ViVeTool-v0.2.1.zip</div>
<div class="a" style="left:274.10px;top:273.50px;font-size:7.6px;line-height:10px;color:#606060;transform:scale(0.8982,1.130);transform-origin:0 50%;will-change:opacity;-webkit-text-stroke:0.15px #606060;">21-01-2022 15:03</div>
<div class="a" style="left:363.80px;top:273.50px;font-size:7.6px;line-height:10px;color:#606060;transform:scale(0.9573,1.130);transform-origin:0 50%;will-change:opacity;-webkit-text-stroke:0.15px #606060;">Compressed (zipp...</div>
<div class="a" style="left:462.70px;top:273.50px;font-size:7.6px;line-height:10px;color:#606060;transform:scale(0.8453,1.130);transform-origin:0 50%;will-change:opacity;-webkit-text-stroke:0.15px #606060;">12 KB</div>
<svg style="left:111.8px;top:291.6px" width="9" height="11" viewBox="0 0 9 11"><path d="M0.6 0.5H5.8L8.4 3.1V10.5H0.6Z" fill="#f4f7fb" stroke="#8a9bb0" stroke-width="0.7"/><rect x="2.4" y="4.2" width="4.2" height="4" fill="#24456e"/><path d="M2.6 8L4 6.2L5.2 7.4L6.4 6.4V8Z" fill="#7fb0e0"/></svg>
<div class="a" style="left:123.90px;top:292.90px;font-size:7.6px;line-height:10px;color:#1b1b1b;transform:scale(0.9420,1.130);transform-origin:0 50%;will-change:opacity;-webkit-text-stroke:0.22px #1b1b1b;">Kochelsee in Bavaria.jpg</div>
<div class="a" style="left:274.10px;top:292.90px;font-size:7.6px;line-height:10px;color:#606060;transform:scale(0.8982,1.130);transform-origin:0 50%;will-change:opacity;-webkit-text-stroke:0.15px #606060;">06-01-2022 19:18</div>
<div class="a" style="left:363.80px;top:292.90px;font-size:7.6px;line-height:10px;color:#606060;transform:scale(0.8545,1.130);transform-origin:0 50%;will-change:opacity;-webkit-text-stroke:0.15px #606060;">JPG File</div>
<div class="a" style="left:458.60px;top:292.90px;font-size:7.6px;line-height:10px;color:#606060;transform:scale(0.8664,1.130);transform-origin:0 50%;will-change:opacity;-webkit-text-stroke:0.15px #606060;">677 KB</div>
<svg style="left:104px;top:313.30px" width="7" height="4" viewBox="0 0 7 4"><path d="M0.4 0.4L3.5 3.5L6.6 0.4" stroke="#7d8797" stroke-width="0.8" fill="none"/></svg>
<div class="a" style="left:113.50px;top:309.50px;font-size:9.2px;line-height:12px;color:#2e4170;transform:scale(1.0470,1.000);transform-origin:0 50%;will-change:opacity;-webkit-text-stroke:0.02px #2e4170;">A long time ago</div>
<svg style="left:111.6px;top:328.7px" width="10" height="8.6" viewBox="0 0 10 8.6"><path d="M0.3 1.2Q0.3 0.4 1 0.4H3.6L4.6 1.3H9Q9.7 1.3 9.7 2V7.8Q9.7 8.3 9.2 8.3H0.8Q0.3 8.3 0.3 7.8Z" fill="#dba530"/><path d="M0.3 2.7H9.7V7.8Q9.7 8.3 9.2 8.3H0.8Q0.3 8.3 0.3 7.8Z" fill="#f9d05a"/><path d="M0.3 2.7H9.7V4H0.3Z" fill="#f2c340"/></svg>
<div class="a" style="left:123.90px;top:329.30px;font-size:7.6px;line-height:10px;color:#1b1b1b;transform:scale(0.9071,1.130);transform-origin:0 50%;will-change:opacity;-webkit-text-stroke:0.22px #1b1b1b;">2021-12</div>
<div class="a" style="left:274.10px;top:329.30px;font-size:7.6px;line-height:10px;color:#606060;transform:scale(0.8982,1.130);transform-origin:0 50%;will-change:opacity;-webkit-text-stroke:0.15px #606060;">16-12-2021 14:00</div>
<div class="a" style="left:363.80px;top:329.30px;font-size:7.6px;line-height:10px;color:#606060;transform:scale(0.9590,1.130);transform-origin:0 50%;will-change:opacity;-webkit-text-stroke:0.15px #606060;">File folder</div>
<svg style="left:111.6px;top:348.0px" width="10" height="8.6" viewBox="0 0 10 8.6"><path d="M0.3 1.2Q0.3 0.4 1 0.4H3.6L4.6 1.3H9Q9.7 1.3 9.7 2V7.8Q9.7 8.3 9.2 8.3H0.8Q0.3 8.3 0.3 7.8Z" fill="#dba530"/><path d="M0.3 2.7H9.7V7.8Q9.7 8.3 9.2 8.3H0.8Q0.3 8.3 0.3 7.8Z" fill="#f9d05a"/><path d="M0.3 2.7H9.7V4H0.3Z" fill="#f2c340"/></svg>
<div class="a" style="left:123.90px;top:348.60px;font-size:7.6px;line-height:10px;color:#1b1b1b;transform:scale(0.9630,1.130);transform-origin:0 50%;will-change:opacity;-webkit-text-stroke:0.22px #1b1b1b;">ShareX-portable</div>
<div class="a" style="left:274.10px;top:348.60px;font-size:7.6px;line-height:10px;color:#606060;transform:scale(0.8982,1.130);transform-origin:0 50%;will-change:opacity;-webkit-text-stroke:0.15px #606060;">09-12-2021 10:05</div>
<div class="a" style="left:363.80px;top:348.60px;font-size:7.6px;line-height:10px;color:#606060;transform:scale(0.9590,1.130);transform-origin:0 50%;will-change:opacity;-webkit-text-stroke:0.15px #606060;">File folder</div>
<svg style="left:111.6px;top:367.2px" width="10" height="8.6" viewBox="0 0 10 8.6"><path d="M0.3 1.2Q0.3 0.4 1 0.4H3.6L4.6 1.3H9Q9.7 1.3 9.7 2V7.8Q9.7 8.3 9.2 8.3H0.8Q0.3 8.3 0.3 7.8Z" fill="#dba530"/><path d="M0.3 2.7H9.7V7.8Q9.7 8.3 9.2 8.3H0.8Q0.3 8.3 0.3 7.8Z" fill="#f9d05a"/><path d="M0.3 2.7H9.7V4H0.3Z" fill="#f2c340"/></svg>
<div class="a" style="left:123.90px;top:367.80px;font-size:7.6px;line-height:10px;color:#1b1b1b;transform:scale(1.0208,1.130);transform-origin:0 50%;will-change:opacity;-webkit-text-stroke:0.22px #1b1b1b;">windows-10-home-group-policy</div>
<div class="a" style="left:274.10px;top:367.80px;font-size:7.6px;line-height:10px;color:#606060;transform:scale(0.9068,1.130);transform-origin:0 50%;will-change:opacity;-webkit-text-stroke:0.15px #606060;">08-11-2021 13:58</div>
<div class="a" style="left:363.80px;top:367.80px;font-size:7.6px;line-height:10px;color:#606060;transform:scale(0.9590,1.130);transform-origin:0 50%;will-change:opacity;-webkit-text-stroke:0.15px #606060;">File folder</div>
<svg style="left:111px;top:386.4px" width="10.5" height="10" viewBox="0 0 10.5 10"><rect x="0.3" y="0.4" width="9.8" height="8.6" rx="0.6" fill="#2f7fc2"/><rect x="1.1" y="1.3" width="8.2" height="6.8" fill="#bde0f6"/><rect x="2.6" y="3" width="6" height="4.4" fill="#3f98d8"/><circle cx="2.6" cy="8.2" r="1.6" fill="#fff"/><circle cx="2.6" cy="8.2" r="1" fill="#e05050"/></svg>
<div class="a" style="left:123.90px;top:387.20px;font-size:7.6px;line-height:10px;color:#1b1b1b;transform:scale(0.9664,1.130);transform-origin:0 50%;will-change:opacity;-webkit-text-stroke:0.22px #1b1b1b;">WindowsPCHealthCheckSetup.msi</div>
<div class="a" style="left:274.10px;top:387.20px;font-size:7.6px;line-height:10px;color:#606060;transform:scale(0.9068,1.130);transform-origin:0 50%;will-change:opacity;-webkit-text-stroke:0.15px #606060;">04-11-2021 09:01</div>
<div class="a" style="left:363.80px;top:387.20px;font-size:7.6px;line-height:10px;color:#606060;transform:scale(0.9574,1.130);transform-origin:0 50%;will-change:opacity;-webkit-text-stroke:0.15px #606060;">Windows Installer ...</div>
<div class="a" style="left:449.80px;top:387.20px;font-size:7.6px;line-height:10px;color:#606060;transform:scale(0.8565,1.130);transform-origin:0 50%;will-change:opacity;-webkit-text-stroke:0.15px #606060;">13,888 KB</div>
<div class="a" style="left:9.30px;top:569.30px;font-size:7.6px;line-height:10px;color:#333;transform:scale(0.9087,1.130);transform-origin:0 50%;will-change:opacity;-webkit-text-stroke:0.22px #333;">12 items</div>
<div class="a" style="left:49.30px;top:569.30px;font-size:7.6px;line-height:10px;color:#333;transform:scale(0.9469,1.130);transform-origin:0 50%;will-change:opacity;-webkit-text-stroke:0.22px #333;">1 item selected</div>
<div class="a" style="left:1170px;top:565px;width:14px;height:15px;border:1px solid #62aab4;background:#dff5f8"></div>
<svg style="left:1173.5px;top:569px" width="8" height="8" viewBox="0 0 8 8"><path d="M0 0.6H8M0 2.6H8M0 4.6H8M0 6.6H8" stroke="#555" stroke-width="1.1"/></svg>
<svg style="left:1186px;top:568px" width="9" height="8" viewBox="0 0 9 8"><rect x="0.6" y="0.6" width="7.8" height="6.8" rx="1.4" stroke="#444" stroke-width="1" fill="none"/></svg>
<div class="a" style="left:0;top:580px;width:1200px;height:30px;background:linear-gradient(90deg,#e7eef7 0%,#e2ebf7 10%,#d8e7fa 20%,#dbe5f8 28%,#dde3f7 33%,#dde5f6 50%,#dfe7f5 70%,#e3eaf5 100%)"></div>
<div class="a" style="left:0;top:580px;width:1200px;height:1px;background:#c9d3de"></div>
<svg style="left:10px;top:588px" width="15" height="14" viewBox="0 0 15 14"><defs><linearGradient id="wdg" x1="0" y1="0" x2="0" y2="1"><stop offset="0" stop-color="#40bcf2"/><stop offset="1" stop-color="#0b6fce"/></linearGradient></defs><rect x="0.5" y="0.5" width="14" height="13" rx="1.3" fill="#1c3c66"/><rect x="1.5" y="1.5" width="5.8" height="11" fill="#fafcff"/><rect x="7.4" y="1.5" width="6.1" height="11" fill="url(#wdg)"/></svg>
<svg style="left:414.5px;top:588px" width="14.5" height="14.5" viewBox="0 0 14.5 14.5"><defs><linearGradient id="wg" x1="0" y1="0" x2="0.3" y2="1"><stop offset="0" stop-color="#25a8ec"/><stop offset="1" stop-color="#0a6ac6"/></linearGradient></defs><rect x="0" y="0" width="14.5" height="14.5" fill="url(#wg)"/><path d="M7.25 0V14.5M0 7.25H14.5" stroke="#8ad6fa" stroke-width="0.6"/></svg>
<svg style="left:442.5px;top:588px" width="14" height="14" viewBox="0 0 14 14"><circle cx="5.5" cy="5.5" r="4.6" stroke="#1c1f2e" stroke-width="1.3" fill="none"/><path d="M8.8 8.8L13 13" stroke="#1c1f2e" stroke-width="1.5" stroke-linecap="round"/></svg>
<svg style="left:469px;top:588px" width="15" height="15" viewBox="0 0 15 15"><rect x="4" y="0.3" width="10.3" height="8.4" fill="#f7f7f4"/><rect x="0" y="4" width="11.3" height="10" fill="#1e1e1e"/><rect x="4" y="4" width="7.3" height="6.7" fill="#d4d0c4"/></svg>
<svg style="left:497px;top:588px" width="15" height="15" viewBox="0 0 15 15"><path d="M7.5 0.5A7 7 0 1 1 3.2 13L0.8 14L1.6 11.4A7 7 0 0 1 7.5 0.5Z" fill="#5d5cc4"/><rect x="3.4" y="5" width="5.4" height="4.6" rx="0.8" fill="#fff"/><path d="M9.2 6.6L11.6 5.2V9.4L9.2 8Z" fill="#fff"/></svg>
<div class="a" style="left:520px;top:583px;width:23.5px;height:24.5px;background:#eef3fa;border-radius:3px"></div>
<svg style="left:524px;top:588px" width="16" height="14" viewBox="0 0 16 14"><path d="M0.5 1.2Q0.5 0.3 1.4 0.3H5.6L7 1.8H14.6Q15.5 1.8 15.5 2.7V12.6H0.5Z" fill="#e3a21a"/><path d="M0.5 3.4H15.5V12.6H0.5Z" fill="#ffce4a"/><rect x="3" y="8.6" width="10" height="4.8" fill="#1c7fd0"/><rect x="3" y="8.6" width="10" height="1.6" fill="#2fa0ee"/></svg>
<div class="a" style="left:527.5px;top:605px;width:9px;height:2px;background:#2a78c8;border-radius:1px"></div>
<svg style="left:552px;top:587.5px" width="15" height="15" viewBox="0 0 15 15"><defs><linearGradient id="eg" x1="1" y1="0" x2="0" y2="1"><stop offset="0" stop-color="#5ad88a"/><stop offset="0.45" stop-color="#1aa0d8"/><stop offset="1" stop-color="#0a58ac"/></linearGradient></defs><circle cx="7.5" cy="7.5" r="7.1" fill="url(#eg)"/><path d="M0.4 7.6Q0.8 14.6 7.6 14.6Q10.8 14.6 12.8 12.4Q8.6 13.2 6.6 10.8Q5 8.6 6.8 6.4Q3.4 4.8 0.4 7.6Z" fill="#0b4f9e"/><circle cx="9.4" cy="8.6" r="2.2" fill="#d4f0f6"/></svg>
<svg style="left:579px;top:588px" width="15" height="15" viewBox="0 0 15 15"><path d="M4.6 3V1.8Q4.6 0.5 5.9 0.5H9.1Q10.4 0.5 10.4 1.8V3" stroke="#1462b0" stroke-width="1" fill="none"/><rect x="0.3" y="3" width="14.4" height="11.8" rx="1.5" fill="#1a4f8e"/><rect x="5" y="6" width="2.3" height="2.3" fill="#f25022"/><rect x="7.8" y="6" width="2.3" height="2.3" fill="#7fba00"/><rect x="5" y="8.8" width="2.3" height="2.3" fill="#00a4ef"/><rect x="7.8" y="8.8" width="2.3" height="2.3" fill="#ffb900"/></svg>
<svg style="left:607.5px;top:588px" width="15" height="15" viewBox="0 0 15 15"><path d="M0.8 9.5V0.8H9.5" stroke="#d94040" stroke-width="1.2" stroke-dasharray="1.4 1" fill="none"/><rect x="1.4" y="1.4" width="7" height="7" fill="#fff0f0"/><path d="M4 4L11 13M11 6L4.5 13" stroke="#3a98d8" stroke-width="1" fill="none"/><circle cx="4" cy="13" r="1.4" stroke="#3a98d8" stroke-width="1" fill="none"/><circle cx="12.5" cy="6" r="1.4" stroke="#3a98d8" stroke-width="1" fill="none"/></svg>
<svg style="left:634px;top:588px" width="15" height="15" viewBox="0 0 15 15"><circle cx="7.5" cy="7.5" r="7.2" fill="#3a2a2a"/><circle cx="7.5" cy="7.5" r="6" fill="#221818"/><path d="M5.5 4.2L11 7.5L5.5 10.8Z" fill="#fff"/></svg>
<svg style="left:664px;top:585px" width="18" height="18" viewBox="0 0 18 18"><path d="M0.5 5Q0.5 3 2.5 3H8V16.5H2Q0.5 16.5 0.5 15Z" fill="#0d63c4"/><path d="M3 5H9V16.5H3Z" fill="#1d86e2"/><circle cx="12.2" cy="5.2" r="5" fill="#1063c0"/><circle cx="12.2" cy="5.2" r="4" fill="#1a70d0"/><text x="12.2" y="7.6" font-family="Liberation Sans" font-size="6.4" fill="#fff" text-anchor="middle">18</text></svg>
<svg style="left:691px;top:587px" width="13" height="16" viewBox="0 0 13 16"><rect x="0.5" y="1.5" width="12" height="13" rx="1" fill="#34b0d6"/><rect x="0.5" y="13" width="12" height="2" fill="#8a6a4a"/><path d="M2.5 0.5V2.5M4.5 0.5V2.5M6.5 0.5V2.5M8.5 0.5V2.5M10.5 0.5V2.5" stroke="#333" stroke-width="0.8"/><path d="M2.5 5H10.5M2.5 7.2H10.5M2.5 9.4H10.5M2.5 11.6H10.5" stroke="#156f9a" stroke-width="0.8"/></svg>
<div class="a" style="left:711.5px;top:583px;width:25px;height:25px;background:#f6e6ea;border-radius:3px"></div>
<div class="a" style="left:716.5px;top:587px;width:15.5px;height:15.5px;border-radius:6px;background:conic-gradient(from 20deg,#34b45a,#f2c21c 25%,#f07020 45%,#e83040 60%,#c02878 70%,#2a8de0 85%,#34b45a)"></div>
<div class="a" style="left:721.2px;top:591.7px;width:6.2px;height:6.2px;border-radius:50%;background:#fff"></div>
<div class="a" style="left:722px;top:605px;width:4.5px;height:2px;background:#c4263c;border-radius:1px"></div>
<svg style="left:744px;top:589px" width="16" height="12" viewBox="0 0 16 12"><path d="M5.6 10.6L15 1.6" stroke="#4f9be6" stroke-width="2.8" stroke-linecap="round"/><path d="M1.4 6.8L5.6 10.6" stroke="#1b56b2" stroke-width="2.8" stroke-linecap="round"/></svg>
<svg style="left:771.5px;top:589px" width="15" height="12" viewBox="0 0 15 12"><rect x="0.2" y="0.2" width="14.6" height="11.6" rx="1" fill="#2b2b2b"/><rect x="0.2" y="0.2" width="14.6" height="1.8" fill="#4a4a4a"/><path d="M3 4.6L5.4 6.6L3 8.6M6.4 9H11" stroke="#fff" stroke-width="1" fill="none"/></svg>
<div class="a" style="left:777.5px;top:605px;width:3.5px;height:1.5px;background:#666;border-radius:1px"></div>
<svg style="left:1034px;top:592.5px" width="8" height="5" viewBox="0 0 8 5"><path d="M0.6 4.2L4 0.8L7.4 4.2" stroke="#222" stroke-width="1.1" fill="none"/></svg>
<svg style="left:1052px;top:590.8px" width="10" height="8" viewBox="0 0 10 8"><rect x="0.5" y="0.5" width="9" height="7" rx="1" stroke="#333" stroke-width="0.9" fill="none"/><path d="M0.6 4.6H9.4M5 4.6V7.4" stroke="#333" stroke-width="0.8"/></svg>
<div class="a" style="left:1074.00px;top:586.00px;font-size:7.4px;line-height:10px;color:#1a1a1a;transform:scale(0.8481,1.100);transform-origin:0 50%;will-change:opacity;-webkit-text-stroke:0.22px #1a1a1a;">ENG</div>
<div class="a" style="left:1077.70px;top:596.50px;font-size:7.4px;line-height:10px;color:#1a1a1a;transform:scale(0.8784,1.100);transform-origin:0 50%;will-change:opacity;-webkit-text-stroke:0.22px #1a1a1a;">IN</div>
<svg style="left:1100px;top:590px" width="11" height="10" viewBox="0 0 11 10"><path d="M6.5 1H1V7.6H6.5" stroke="#333" stroke-width="0.9" fill="none"/><path d="M3.7 7.6V9.4M2 9.4H6" stroke="#333" stroke-width="0.8"/><path d="M8.6 1.2V9.4" stroke="#333" stroke-width="0.8"/><circle cx="8.6" cy="1.6" r="1.2" stroke="#333" stroke-width="0.7" fill="none"/><path d="M7 9.4H10" stroke="#333" stroke-width="0.8"/></svg>
<svg style="left:1115px;top:590.5px" width="11" height="9" viewBox="0 0 11 9"><path d="M0.6 3H2.6L5 0.8V8.2L2.6 6H0.6Z" stroke="#333" stroke-width="0.8" fill="none"/><path d="M6.6 3Q7.4 4.5 6.6 6M8 1.8Q9.4 4.5 8 7.2M9.4 0.8Q11.2 4.5 9.4 8.2" stroke="#333" stroke-width="0.95" fill="none"/></svg>
<div class="a" style="left:1157.00px;top:586.00px;font-size:7.4px;line-height:10px;color:#1a1a1a;transform:scale(0.8640,1.100);transform-origin:0 50%;will-change:opacity;-webkit-text-stroke:0.22px #1a1a1a;">10:43</div>
<div class="a" style="left:1136.40px;top:595.70px;font-size:7.4px;line-height:10px;color:#1a1a1a;transform:scale(0.9669,1.100);transform-origin:0 50%;will-change:opacity;-webkit-text-stroke:0.22px #1a1a1a;">10-03-2022</div>
<svg style="left:1177.5px;top:589.5px" width="10" height="10" viewBox="0 0 10 10"><circle cx="5" cy="5" r="4.8" fill="#1457b8"/><text x="5" y="7.3" font-family="Liberation Sans" font-size="6.6" fill="#fff" text-anchor="middle">2</text></svg>
</div></body></html>
